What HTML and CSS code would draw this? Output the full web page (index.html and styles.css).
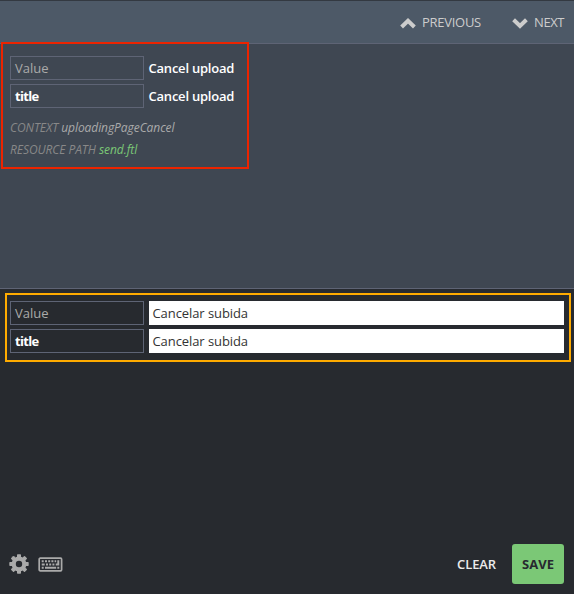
FILE: index.html
```html
<!DOCTYPE html>
<html lang="en">
<head>
<meta charset="utf-8">
<title>Translation editor</title>
<link rel="stylesheet" href="styles.css">
</head>
<body>
<div class="app">
  <header class="topbar">
    <a class="nav"><svg class="chev" width="16" height="11" viewBox="0 0 16 11"><path d="M1.6 9 8 2.8 14.4 9"/></svg><span class="prev">PREVIOUS</span></a>
    <a class="nav"><svg class="chev" width="16" height="11" viewBox="0 0 16 11"><path d="M1.6 1.7 8 7.9 14.4 1.7"/></svg><span class="next">NEXT</span></a>
  </header>
  <section class="source">
    <div class="row"><div class="key">Value</div><div class="original"><span>Cancel upload</span></div></div>
    <div class="row"><div class="key attr">title</div><div class="original"><span>Cancel upload</span></div></div>
    <p class="meta context"><span class="label">CONTEXT</span> <span class="val">uploadingPageCancel</span></p>
    <p class="meta path"><span class="label">RESOURCE PATH</span> <span class="val link">send.ftl</span></p>
    <div class="outline red"></div>
  </section>
  <section class="editor">
    <div class="row"><div class="key">Value</div><div class="field">Cancelar subida</div></div>
    <div class="row"><div class="key attr">title</div><div class="field">Cancelar subida</div></div>
    <div class="outline orange"></div>
  </section>
  <footer class="actions">
    <svg class="gear" width="20" height="20" viewBox="-10 -10 20 20">
      <g fill="#aaa"><g id="t"><rect x="-2" y="-9.7" width="4" height="19.4" rx=".7"/><rect x="-9.7" y="-2" width="19.4" height="4" rx=".7"/></g><use href="#t" transform="rotate(45)"/><circle r="7.4"/></g>
      <circle r="3.2" fill="#272a2f"/>
    </svg>
    <svg class="keyboard" width="25" height="15" viewBox="0 0 25 15">
      <rect x="1.2" y="1.2" width="22.4" height="12.6" rx="1" fill="none" stroke="#aaa" stroke-width="1.7"/>
      <path fill="#aaa" d="M3.7 3.3h2v2h-2zM7 3.3h2v2H7zM10.2 3.3h2v2h-2zM13.4 3.3h2v2h-2zM16.6 3.3h1.6v2h-1.6zM19.3 3.3h2v5.2h-3.6v-2h1.6zM3.7 6.5h3v2h-3zM8 6.5h2v2H8zM11.2 6.5h2v2h-2zM14.4 6.5h2v2h-2zM3.7 9.8h2v2h-2zM7 9.8h11.2v2H7zM19.3 9.8h2v2h-2z"/>
    </svg>
    <span class="clear">CLEAR</span>
    <span class="save"><span class="save-text">SAVE</span></span>
  </footer>
</div>
</body>
</html>
```

FILE: styles.css
```css
* { box-sizing: border-box; }
body { margin: 0; background: #272a2f; font: 14px/22px "Open Sans", sans-serif; color: #fff; }
.app { height: 594px; display: flex; flex-direction: column; overflow: hidden; white-space: nowrap; }
.topbar { height: 44px; border-top: 1px solid #333941; border-bottom: 1px solid #5e6475; background: #4d5967; display: flex; justify-content: flex-end; align-items: center; gap: 30px; padding-right: 10px; color: #ccc; font-size: 13px; }
.nav { display: flex; align-items: center; gap: 6px; }
.prev { width: 60px; letter-spacing: -.28px; }
.next { width: 30px; letter-spacing: -.4px; }
.chev { fill: none; stroke: #ccc; stroke-width: 4; margin-top: 2px; }
.source { position: relative; height: 245px; background: #3f4752; border-bottom: 1px solid #5e6475; padding: 12px 10px 0; }
.editor { position: relative; padding: 12px 10px 0; }
.row { display: flex; gap: 5px; height: 24px; margin-bottom: 4px; }
.key { width: 134px; border: 1px solid #5e6475; padding-left: 4px; color: #aaa; font-size: 13px; }
.attr { color: #fff; font-weight: 700; letter-spacing: -.7px; }
.original { font-size: 13px; line-height: 24px; font-weight: 600; letter-spacing: -.22px; margin-left: -.5px; }
.field { flex: 1; background: #fff; color: #333; padding-left: 3.5px; font-size: 13px; line-height: 24px; letter-spacing: -.08px; }
.meta { margin: 0; font-size: 12px; line-height: 22px; font-style: italic; }
.context { margin-top: 9px; }
.label { color: #888; letter-spacing: -.07px; }
.val { color: #aaa; font-weight: 500; letter-spacing: -.07px; }
.link { color: #7bc876; }
.outline { position: absolute; pointer-events: none; }
.red { left: 1px; top: -2px; width: 248px; height: 127px; border: 2px solid #ec2400; }
.orange { left: 5px; top: 4px; width: 566px; height: 69px; border: 2px solid #ffab00; }
.actions { margin-top: auto; height: 50px; padding: 0 10px 10px 9px; display: flex; align-items: center; }
.keyboard { margin-left: 9px; margin-top: 1px; }
.clear { margin-left: auto; margin-right: 16px; font-size: 13px; font-weight: 600; color: #ebebeb; letter-spacing: -.1px; }
.save { width: 52px; height: 40px; border-radius: 3px; background: #7bc876; color: #272a2f; display: flex; align-items: center; justify-content: center; font-size: 13px; font-weight: 700; }
```
